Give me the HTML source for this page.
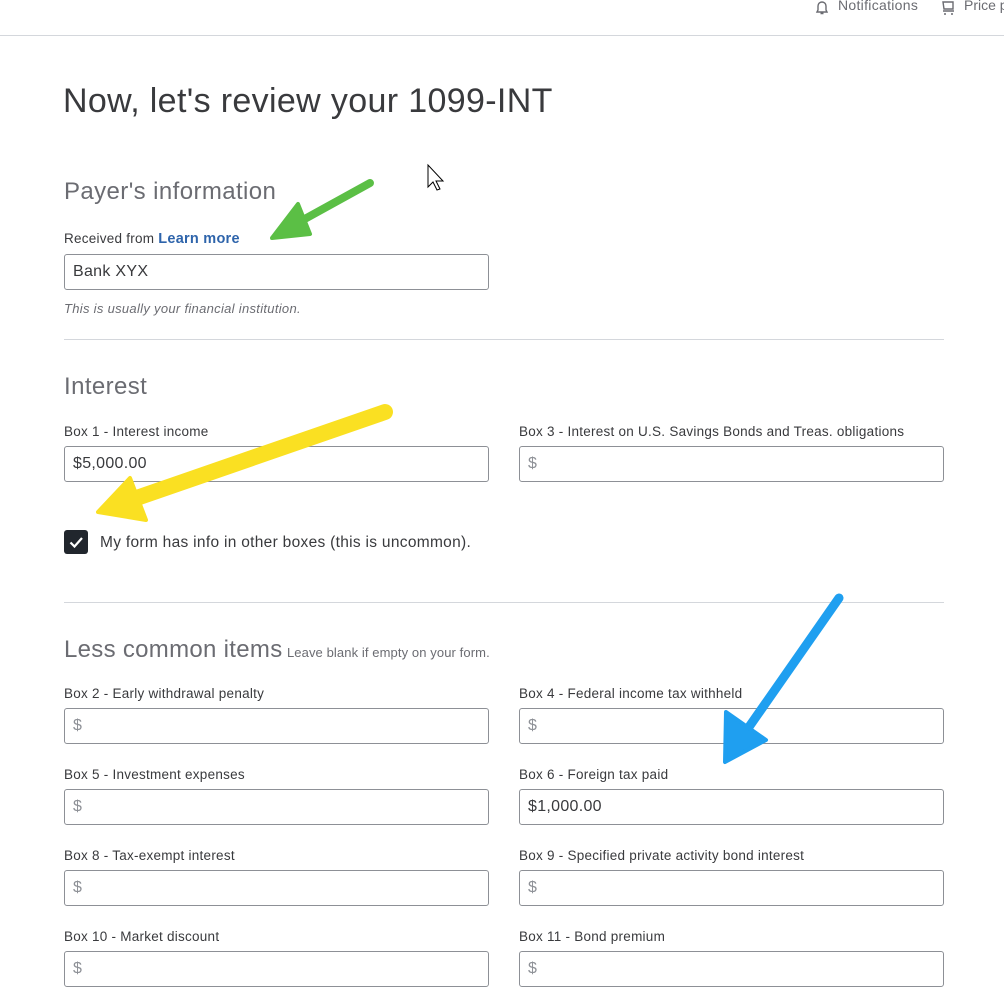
<!DOCTYPE html>
<html><head><meta charset="utf-8"><style>
body{margin:0;width:1004px;height:965px;overflow:hidden;background:#fff;font-family:"Liberation Sans",sans-serif;color:#393a3d;position:relative}
.a{position:absolute;white-space:nowrap}
.lbl{position:absolute;font-size:13.5px;color:#393a3d;letter-spacing:0.25px;white-space:nowrap}
.in{position:absolute;height:34px;border:1px solid #8d9096;border-radius:3px;box-sizing:content-box;font-size:16px;line-height:34px;padding-left:8px;width:415px;color:#393a3d;letter-spacing:0.3px}
.in.e{color:#8d9096}
.hr{position:absolute;left:64px;width:880px;height:1px;background:#d4d7dc}
h2{position:absolute;margin:0;font-weight:normal;font-size:24px;color:#6b6c72;letter-spacing:0.4px;white-space:nowrap}
</style></head><body>
<div class="a" style="left:0;top:35px;width:1004px;height:1px;background:#d4d7dc"></div>
<svg class="a" style="left:814px;top:0" width="16" height="16" viewBox="0 0 16 16"><path d="M3 12 L4 10 V6 a4 4 0 0 1 8 0 V10 L13 12 Z M6.5 13.5 h3" fill="none" stroke="#6b6c72" stroke-width="1.4"/></svg>
<div class="a" style="left:838px;top:-3px;font-size:14px;color:#6b6c72;letter-spacing:0.3px">Notifications</div>
<svg class="a" style="left:941px;top:0" width="16" height="16" viewBox="0 0 16 16"><path d="M2 2 h10 v7 H3 Z M2 11 h11" fill="none" stroke="#6b6c72" stroke-width="1.4"/><circle cx="4" cy="14" r="1" fill="#6b6c72"/><circle cx="11" cy="14" r="1" fill="#6b6c72"/></svg>
<div class="a" style="left:964px;top:-3px;font-size:14px;color:#6b6c72">Price p</div>

<div class="a" style="left:63px;top:82px;font-size:34px;color:#393a3d;letter-spacing:0.35px">Now, let's review your 1099-INT</div>

<h2 style="left:64px;top:178px">Payer's information</h2>
<div class="lbl" style="left:64px;top:231px">Received from <b style="color:#2e64ab;font-size:14.5px">Learn more</b></div>
<div class="in" style="left:64px;top:254px">Bank XYX</div>
<div class="a" style="left:64px;top:301px;font-size:13px;font-style:italic;color:#6b6c72;letter-spacing:0.3px">This is usually your financial institution.</div>
<div class="hr" style="top:339px"></div>

<h2 style="left:64px;top:373px">Interest</h2>
<div class="lbl" style="left:64px;top:424px">Box 1 - Interest income</div>
<div class="in" style="left:64px;top:446px">$5,000.00</div>
<div class="lbl" style="left:519px;top:424px">Box 3 - Interest on U.S. Savings Bonds and Treas. obligations</div>
<div class="in e" style="left:519px;top:446px">$</div>
<div class="a" style="left:64px;top:530px;width:24px;height:24px;background:#21262d;border-radius:3px"></div>
<svg class="a" style="left:64px;top:530px" width="24" height="24"><path d="M6.5 12.5 L10.5 16.5 L18 8" fill="none" stroke="#fff" stroke-width="2.2"/></svg>
<div class="a" style="left:100px;top:534px;font-size:15.5px;letter-spacing:0.3px">My form has info in other boxes (this is uncommon).</div>
<div class="hr" style="top:602px"></div>

<div class="a" style="left:64px;top:636px"><span style="font-size:24px;color:#6b6c72;letter-spacing:0.3px">Less common items</span> <span style="font-size:13px;color:#6b6c72;letter-spacing:0.1px">Leave blank if empty on your form.</span></div>
<div class="lbl" style="left:64px;top:686px">Box 2 - Early withdrawal penalty</div>
<div class="in e" style="left:64px;top:708px">$</div>
<div class="lbl" style="left:519px;top:686px">Box 4 - Federal income tax withheld</div>
<div class="in e" style="left:519px;top:708px">$</div>
<div class="lbl" style="left:64px;top:767px">Box 5 - Investment expenses</div>
<div class="in e" style="left:64px;top:789px">$</div>
<div class="lbl" style="left:519px;top:767px">Box 6 - Foreign tax paid</div>
<div class="in" style="left:519px;top:789px">$1,000.00</div>
<div class="lbl" style="left:64px;top:848px">Box 8 - Tax-exempt interest</div>
<div class="in e" style="left:64px;top:870px">$</div>
<div class="lbl" style="left:519px;top:848px">Box 9 - Specified private activity bond interest</div>
<div class="in e" style="left:519px;top:870px">$</div>
<div class="lbl" style="left:64px;top:929px">Box 10 - Market discount</div>
<div class="in e" style="left:64px;top:951px">$</div>
<div class="lbl" style="left:519px;top:929px">Box 11 - Bond premium</div>
<div class="in e" style="left:519px;top:951px">$</div>

<svg class="a" style="left:0;top:0" width="1004" height="965">
<path d="M428 165 L428 187 L433 182 L437 190 L440 189 L436 181 L443 181 Z" fill="#fff" stroke="#000" stroke-width="1"/>
<line x1="370" y1="183" x2="292" y2="226" stroke="#5bbf45" stroke-width="8" stroke-linecap="round"/>
<polygon points="272,238 298,204 310,234" fill="#5bbf45" stroke="#5bbf45" stroke-width="4" stroke-linejoin="round"/>
<line x1="385" y1="412" x2="125" y2="502" stroke="#fae022" stroke-width="16" stroke-linecap="round"/>
<polygon points="98,512 130,478 146,520" fill="#fae022" stroke="#fae022" stroke-width="4" stroke-linejoin="round"/>
<line x1="839" y1="598" x2="742" y2="737" stroke="#1f9ff0" stroke-width="9" stroke-linecap="round"/>
<polygon points="725,762 726,712 766,740" fill="#1f9ff0" stroke="#1f9ff0" stroke-width="4" stroke-linejoin="round"/>
</svg>
</body></html>
